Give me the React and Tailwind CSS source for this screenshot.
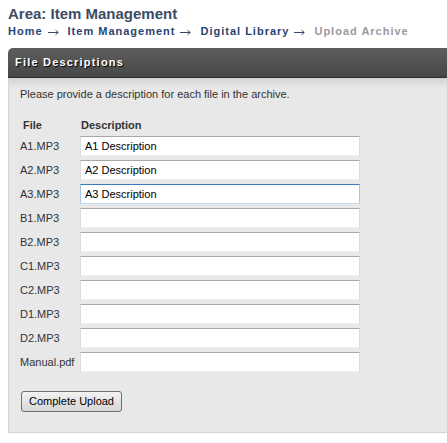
import React, { useState } from 'react'

const files = [
  { name: 'A1.MP3', desc: 'A1 Description' },
  { name: 'A2.MP3', desc: 'A2 Description' },
  { name: 'A3.MP3', desc: 'A3 Description', focused: true },
  { name: 'B1.MP3', desc: '' },
  { name: 'B2.MP3', desc: '' },
  { name: 'C1.MP3', desc: '' },
  { name: 'C2.MP3', desc: '' },
  { name: 'D1.MP3', desc: '' },
  { name: 'D2.MP3', desc: '' },
  { name: 'Manual.pdf', desc: '' },
]

function Arrow() {
  return (
    <svg width="11" height="7" viewBox="0 0 11 7" className="ml-[5px] mr-[9px] mt-[2px] shrink-0">
      <path d="M0 3.5H10" stroke="#3a4a66" strokeWidth="1" />
      <path d="M7.5 1.2L10.3 3.5L7.5 5.8" stroke="#3a4a66" strokeWidth="1" fill="none" />
    </svg>
  )
}

function FileRow({ file, value, onChange }) {
  const border = file.focused
    ? 'border-[#3d7bbd] border-t-[#3d7bbd] border-b-[#c5daed] border-x-[#a9c6e4]'
    : 'border-t-[#a8a8a8] border-x-[#dcdcdc] border-b-[#ececec]'
  return (
    <div className="flex items-center h-6">
      <div className="w-[60px] text-[11px] text-[#333]">{file.name}</div>
      <input
        value={value}
        onChange={onChange}
        className={`w-[280px] h-5 bg-white border px-1 text-[11px] text-black outline-none ${border}`}
      />
    </div>
  )
}

export default function App() {
  const [values, setValues] = useState(files.map((f) => f.desc))

  return (
    <div className="w-[447px] h-[443px] bg-white overflow-hidden font-['Liberation_Sans',Arial,sans-serif]">
      <div className="pl-2 pt-[5px]">
        <h1 className="text-[15px] leading-[18px] font-bold text-[#3c4d63]">Area: Item Management</h1>
        <div className="mt-[2px] flex items-center h-[13px] text-[11px] leading-[13px] font-bold tracking-[1px] text-[#2b4470] whitespace-nowrap">
          <span>Home</span>
          <Arrow />
          <span>Item Management</span>
          <Arrow />
          <span>Digital Library</span>
          <Arrow />
          <span className="text-[#9a9a9a]">Upload Archive</span>
        </div>
      </div>

      <div className="ml-2 mt-[10px]">
        <div className="h-[30px] rounded-tl-[5px] bg-gradient-to-b from-[#5e5e5e] to-[#474747] border-b border-[#2e2e2e] flex items-center pl-[7px]">
          <span className="text-[11px] font-bold tracking-[1.2px] text-white [text-shadow:1px_1px_1px_#000]">
            File Descriptions
          </span>
        </div>
        <div className="h-[355px] bg-[#e8e8e8] border-l border-b border-[#d4d4d4] relative">
          <div className="absolute inset-x-0 top-0 h-[10px] bg-gradient-to-b from-[#d3d3d3] to-[#e8e8e8]" />
          <div className="relative pl-[11px] pt-[10px]">
            <p className="text-[11px] leading-[13px] text-[#333]">
              Please provide a description for each file in the archive.
            </p>
            <div className="mt-[18px] flex text-[11px] font-bold text-[#333] h-[13px] items-center">
              <div className="w-[60px] pl-[3px]">File</div>
              <div className="pl-[1px]">Description</div>
            </div>
            <div className="mt-[2px]">
              {files.map((f, i) => (
                <FileRow
                  key={f.name}
                  file={f}
                  value={values[i]}
                  onChange={(e) =>
                    setValues((prev) => prev.map((v, j) => (j === i ? e.target.value : v)))
                  }
                />
              ))}
            </div>
            <button
              type="button"
              className="mt-[17px] ml-[1px] w-[101px] h-[21px] rounded-[3px] border border-[#707070] bg-gradient-to-b from-[#f2f2f2] to-[#d6d6d6] text-[11px] text-black"
            >
              Complete Upload
            </button>
          </div>
        </div>
      </div>
    </div>
  )
}
